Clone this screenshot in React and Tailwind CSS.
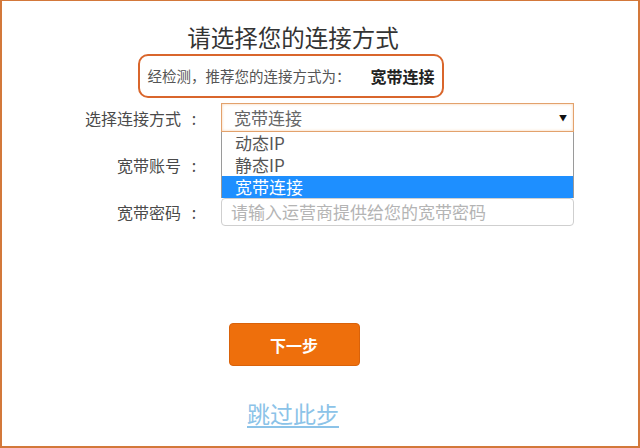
const font = { fontFamily: '"Microsoft YaHei", "Noto Sans CJK SC", "Liberation Sans", sans-serif' };

const options = ['动态IP', '静态IP', '宽带连接'];

const Label = ({ children }) => (
  <label className="w-[146px] flex justify-end items-center text-[16px] text-[#4a4a4a]">
    <span>{children}</span>
    <span className="w-[26px] text-center">:</span>
  </label>
);

const App = () => {
  return (
    <div
      className="w-[640px] h-[448px] bg-white border-x-2 border-b-2 border-t border-[#d3783a] flex flex-col items-center text-[#444] pt-[19px]"
      style={font}
    >
      {/* Title */}
      <h1 className="text-[23.5px] leading-[34px] text-[#333] ml-[-54px] w-full text-center">
        请选择您的连接方式
      </h1>

      {/* Detected notice */}
      <div className="mt-0 w-[306px] h-[44px] ml-[-58px] border-2 border-[#d9662c] rounded-[10px] flex items-center justify-center gap-[20px]">
        <span className="text-[14.5px] text-[#555]">经检测，推荐您的连接方式为：</span>
        <span className="text-[16px] font-bold text-[#222]">宽带连接</span>
      </div>

      {/* Form */}
      <div className="w-full pl-[59px] mt-[5px] flex flex-col gap-[19px]">
        <div className="flex items-center h-[29px]">
          <Label>选择连接方式</Label>
          <div className="relative ml-[14px] w-[353px] h-[29px]">
            <div className="h-full border border-[#e3a26c] shadow-[inset_0_0_3px_#f7cfae] bg-white flex items-center pl-[12px] pr-[6px]">
              <span className="flex-1 text-[17px] text-[#666]">宽带连接</span>
              <span className="text-[8px] text-[#111]">▼</span>
            </div>
            {/* Open option list */}
            <ul className="absolute left-0 top-full w-full bg-white border-x border-[#9a9a9a] z-10">
              {options.map((o) => (
                <li
                  key={o}
                  className={
                    o === '宽带连接'
                      ? 'h-[22px] leading-[22px] pl-[13px] text-[17px] bg-[#1e8fff] text-white'
                      : 'h-[22px] leading-[22px] pl-[13px] text-[17px] text-[#555]'
                  }
                >
                  {o}
                </li>
              ))}
            </ul>
          </div>
        </div>

        <div className="flex items-center h-[28px]">
          <Label>宽带账号</Label>
          <div className="ml-[14px] w-[353px] h-[28px] border border-[#cfcfcf] rounded-sm" />
        </div>

        <div className="flex items-center h-[28px]">
          <Label>宽带密码</Label>
          <div className="ml-[14px] w-[353px] h-[28px] border border-[#cfcfcf] rounded-sm flex items-center pl-[9px] text-[17px] text-[#b4b4b4]">
            请输入运营商提供给您的宽带密码
          </div>
        </div>
      </div>

      {/* Actions */}
      <button className="mt-[97px] ml-[-52px] w-[131px] h-[43px] rounded-[4px] bg-[#ee6f0c] border border-[#d9620a] text-white text-[16px] font-bold">
        下一步
      </button>

      <a href="#" className="mt-[32px] ml-[-54px] text-[23px] leading-[30px] text-[#8cc3e8] underline underline-offset-[3px]">
        跳过此步
      </a>
    </div>
  );
};

export default App;
